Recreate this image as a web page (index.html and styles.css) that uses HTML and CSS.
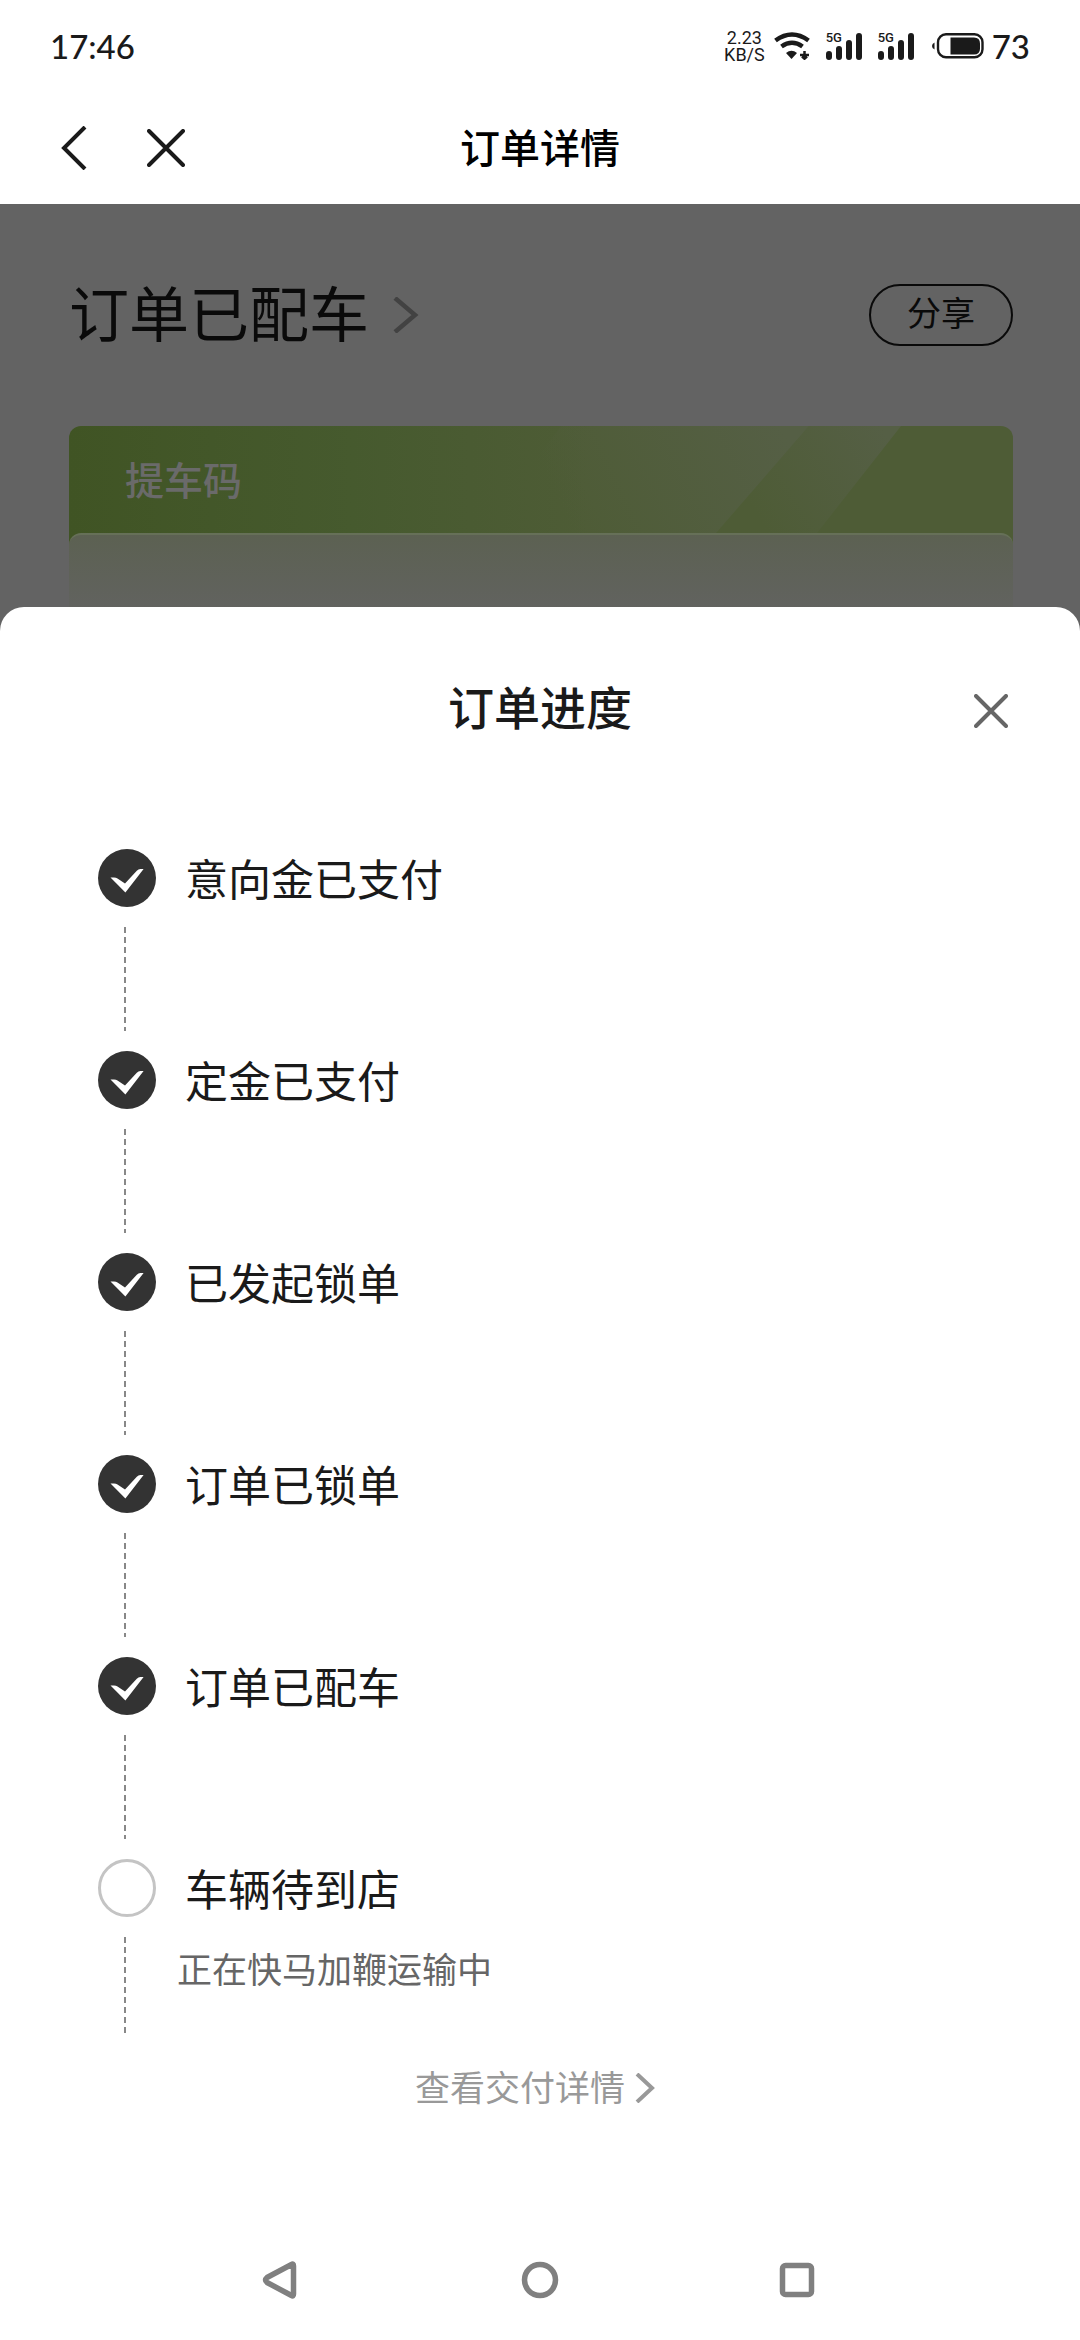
FILE: index.html
```html
<!DOCTYPE html>
<html lang="zh-CN">
<head>
<meta charset="utf-8">
<meta name="viewport" content="width=device-width, initial-scale=1">
<title>订单详情</title>
<link rel="stylesheet" href="styles.css">
</head>
<body>
<svg class="defs" width="0" height="0" aria-hidden="true">
  <symbol id="check" viewBox="0 0 58 58">
    <circle cx="29" cy="29" r="29" fill="#333"/>
    <path d="M12.500 28.500h3.500q2 0 3.500 1l7.500 5 11.800-12.700q1.600-1.800 3.600-1.800h3.200L27.400 43.600z" fill="#fff"/>
  </symbol>
  <symbol id="signal" viewBox="0 0 36 27">
    <path d="M3 21v3M13 16v8M23 10v14M33 3v21" stroke="#1a1a1a" stroke-width="6" stroke-linecap="round"/>
  </symbol>
</svg>

<div class="status-bar">
  <time class="clock">17:46</time>
  <div class="status-icons">
    <div class="speed"><span>2.23</span><span>KB/S</span></div>
    <svg class="wifi" width="36" height="28" viewBox="0 0 36 28" fill="none" stroke="#1a1a1a">
      <path d="M1.500 8.500Q18-3.500 34.500 8.500" stroke-width="4.500"/>
      <path d="M7.500 14.500Q18 7 28.500 14.500" stroke-width="4.500"/>
      <path d="M12 21q5.500-4.500 11 0l-5.500 6z" fill="#1a1a1a" stroke="none"/>
      <path d="M30.500 19v7M26 23h9M28 24.500l2.500 2.200 2.500-2.200" stroke-width="2.500"/>
    </svg>
    <div class="signal"><svg width="36" height="27"><use href="#signal"/></svg><span class="network">5G</span></div>
    <div class="signal"><svg width="36" height="27"><use href="#signal"/></svg><span class="network">5G</span></div>
    <svg class="battery" width="52" height="26" viewBox="0 0 52 26">
      <path d="M2.500 9.500v7Q0 15.500 0 13t2.500-3.500z" fill="#1a1a1a"/>
      <rect x="6" y="1.200" width="44.500" height="23" rx="8" fill="none" stroke="#1a1a1a" stroke-width="2.400"/>
      <path d="M18.500 4.500H42q6 0 6 6v5q0 6-6 6H18.500z" fill="#1a1a1a"/>
    </svg>
    <span class="level">73</span>
  </div>
</div>

<header class="nav-bar">
  <div class="nav-actions">
    <button class="icon-button" aria-label="返回"><svg width="30" height="44" viewBox="0 0 30 44" fill="none" stroke="#1a1a1a" stroke-width="4"><path d="M28 1L7 22l21 21"/></svg></button>
    <button class="icon-button" aria-label="关闭"><svg width="38" height="38" viewBox="0 0 38 38" fill="none" stroke="#1a1a1a" stroke-width="4" stroke-linecap="round"><path d="M2 2l34 34M36 2L2 36"/></svg></button>
  </div>
  <h1 class="nav-title">订单详情</h1>
</header>

<main class="page">
  <section class="order">
    <div class="order-head">
      <a class="order-state" href="#progress">
        <span class="order-label">订单已配车</span>
        <svg width="26" height="36" viewBox="0 0 26 36" fill="none" stroke="#424242" stroke-width="4.500"><path d="M2 1l20 17L2 35"/></svg>
      </a>
      <button class="share">分享</button>
    </div>
    <div class="pickup">
      <svg class="shine" width="460" height="107" viewBox="0 0 460 107" aria-hidden="true">
        <defs>
          <linearGradient id="beam-wide" gradientUnits="userSpaceOnUse" x1="130" y1="100" x2="340" y2="0"><stop offset="0" stop-color="#555f45" stop-opacity="0"/><stop offset="1" stop-color="#555f45"/></linearGradient>
          <linearGradient id="beam-narrow" gradientUnits="userSpaceOnUse" x1="310" y1="80" x2="440" y2="0"><stop offset="0" stop-color="#555f45" stop-opacity="0"/><stop offset="1" stop-color="#555f45"/></linearGradient>
        </defs>
        <path d="M120 0h248L275 107H40z" fill="url(#beam-wide)"/>
        <path d="M368 0h92L376 107H275z" fill="url(#beam-narrow)"/>
      </svg>
      <h2 class="pickup-title">提车码</h2>
      <div class="pickup-body"></div>
    </div>
  </section>

  <section class="sheet" id="progress" role="dialog" aria-labelledby="sheet-title">
    <div class="sheet-head">
      <h2 class="sheet-title" id="sheet-title">订单进度</h2>
      <button class="icon-button" aria-label="关闭进度"><svg width="34" height="34" viewBox="0 0 34 34" fill="none" stroke="#666" stroke-width="4" stroke-linecap="round"><path d="M2 2l30 30M32 2L2 32"/></svg></button>
    </div>
    <ol class="steps">
      <li class="step"><svg class="mark"><use href="#check"/></svg><h3 class="step-title">意向金已支付</h3></li>
      <li class="step"><svg class="mark"><use href="#check"/></svg><h3 class="step-title">定金已支付</h3></li>
      <li class="step"><svg class="mark"><use href="#check"/></svg><h3 class="step-title">已发起锁单</h3></li>
      <li class="step"><svg class="mark"><use href="#check"/></svg><h3 class="step-title">订单已锁单</h3></li>
      <li class="step"><svg class="mark"><use href="#check"/></svg><h3 class="step-title">订单已配车</h3></li>
      <li class="step step-pending"><span class="mark"></span><h3 class="step-title">车辆待到店</h3><p class="step-note">正在快马加鞭运输中</p></li>
    </ol>
    <a class="more" href="#delivery">查看交付详情
      <svg class="more-arrow" width="20" height="30" viewBox="0 0 20 30" fill="none" stroke="#999" stroke-width="4"><path d="M2 1l15 14L2 29"/></svg>
    </a>
  </section>
</main>

<nav class="system-nav">
  <button class="icon-button" aria-label="系统返回"><svg width="40" height="40" viewBox="2 0 40 40" fill="none" stroke="#808080" stroke-width="5.500" stroke-linejoin="round"><path d="M31.500 4.500q2-1.500 2 1.500v28q0 3-2 1.500L7 22.500Q4 20 7 17.500z"/></svg></button>
  <button class="icon-button" aria-label="主屏幕"><svg width="40" height="40" viewBox="0 0 40 40" fill="none" stroke="#808080" stroke-width="5.500"><circle cx="20" cy="20" r="15.500"/></svg></button>
  <button class="icon-button" aria-label="最近任务"><svg width="40" height="40" viewBox="0 0 40 40" fill="none" stroke="#808080" stroke-width="5.500"><rect x="5.500" y="5.500" width="29" height="29" rx="3"/></svg></button>
</nav>
</body>
</html>
```
FILE: styles.css
```css
* {
  box-sizing: border-box;
}

body {
  display: flex;
  flex-direction: column;
  min-height: 100vh;
  margin: 0;
  background: #fff;
  color: #1a1a1a;
  font-family: "Noto Sans CJK SC", sans-serif;
}

h1, h2, h3, p, ol {
  margin: 0;
  padding: 0;
  font-weight: 400;
}

svg {
  display: block;
}

a {
  color: inherit;
  text-decoration: none;
}

.defs {
  position: absolute;
}

.icon-button {
  display: flex;
  padding: 0;
  border: 0;
  background: none;
}

/* Status bar */
.status-bar {
  display: flex;
  align-items: center;
  justify-content: space-between;
  height: 92px;
  padding: 0 50px;
}

.clock,
.level {
  font-family: Lato, sans-serif;
  font-size: 33px;
  font-weight: 500;
  line-height: 40px;
}

.status-icons {
  display: flex;
  align-items: center;
}

.speed {
  display: flex;
  flex-direction: column;
  align-items: center;
  margin-right: 9px;
  font-family: Roboto, sans-serif;
  font-size: 18px;
  line-height: 17px;
}

.signal {
  position: relative;
  margin-left: 16px;
}

.network {
  position: absolute;
  top: -2px;
  left: 0;
  font-family: Roboto, sans-serif;
  font-size: 13px;
  font-weight: 500;
  line-height: 14px;
}

.battery {
  margin: 0 8px 0 18px;
}

/* Title bar */
.nav-bar {
  display: grid;
  grid-template-columns: 1fr auto 1fr;
  align-items: center;
  height: 112px;
  padding: 0 57px;
}

.nav-actions {
  display: flex;
  align-items: center;
  gap: 60px;
}

.nav-title {
  padding-bottom: 4px;
  color: #000;
  font-size: 40px;
  font-weight: 500;
  line-height: 56px;
}

/* Dimmed order page */
.page {
  display: flex;
  flex: 1;
  flex-direction: column;
}

.order {
  padding: 80px 67px 0 69px;
  background: #636363;
  color: #0a0a0a;
}

.order-head {
  display: flex;
  align-items: center;
  justify-content: space-between;
  height: 62px;
}

.order-state {
  display: flex;
  align-items: center;
  gap: 24px;
  font-size: 60px;
  line-height: 62px;
}

.order-label {
  padding-bottom: 8px;
}

.share {
  height: 62px;
  padding: 0 36px 6px;
  border: 2px solid #0a0a0a;
  border-radius: 31px;
  background: none;
  color: #0a0a0a;
  font: 34px/52px "Noto Sans CJK SC", sans-serif;
}

.pickup {
  position: relative;
  margin-top: 80px;
  border-radius: 12px 12px 0 0;
  background: linear-gradient(90deg, #405424, #465a2e 30%, #4e5c36 55%, #4e5c36);
  color: #6a6a6a;
}

.shine {
  position: absolute;
  top: 0;
  right: 112px;
}

.pickup-title {
  padding: 24px 56px 27px;
  font-size: 39px;
  font-weight: 500;
  line-height: 56px;
}

.pickup-body {
  height: 98px;
  border-top: 2px solid #667058;
  border-radius: 12px 12px 0 0;
  background: linear-gradient(#5c6152, #636363);
}

/* Progress sheet */
.sheet {
  position: relative;
  flex: 1;
  margin-top: -24px;
  padding: 70px 72px 0;
  border-radius: 24px 24px 0 0;
  background: #fff;
}

.sheet-head {
  display: grid;
  grid-template-columns: 1fr auto 1fr;
  align-items: center;
  height: 68px;
}

.sheet-title {
  grid-column: 2;
  padding-bottom: 12px;
  font-size: 46px;
  font-weight: 500;
  line-height: 56px;
}

.sheet-head .icon-button {
  justify-self: end;
}

.steps {
  padding: 104px 26px 0;
  list-style: none;
}

.step {
  display: grid;
  grid-template-columns: 58px 1fr;
  grid-template-rows: 58px 104px;
  column-gap: 29px;
  row-gap: 20px;
  padding-bottom: 20px;
}

.step::after {
  grid-area: 2 / 1;
  width: 2px;
  margin-left: 26px;
  background: repeating-linear-gradient(#888 0 6px, transparent 6px 10px);
  content: "";
}

.mark {
  width: 58px;
  height: 58px;
}

.step-title {
  font-size: 43px;
  line-height: 56px;
}

.step-pending {
  grid-template-rows: 58px 96px;
}

.step-pending .mark {
  border: 3px solid #c4c4c4;
  border-radius: 50%;
}

.step-note {
  grid-area: 2 / 2;
  margin-left: -8px;
  color: #666;
  font-size: 35px;
  line-height: 62px;
}

.more {
  display: flex;
  align-items: center;
  justify-content: center;
  gap: 10px;
  width: fit-content;
  margin: 8px auto 0;
  padding-right: 10px;
  color: #999;
  font-size: 35px;
  line-height: 50px;
}

.more-arrow {
  margin-top: 4px;
}

/* System navigation */
.system-nav {
  display: flex;
  justify-content: space-between;
  padding: 0 263px 40px 262px;
}
```
